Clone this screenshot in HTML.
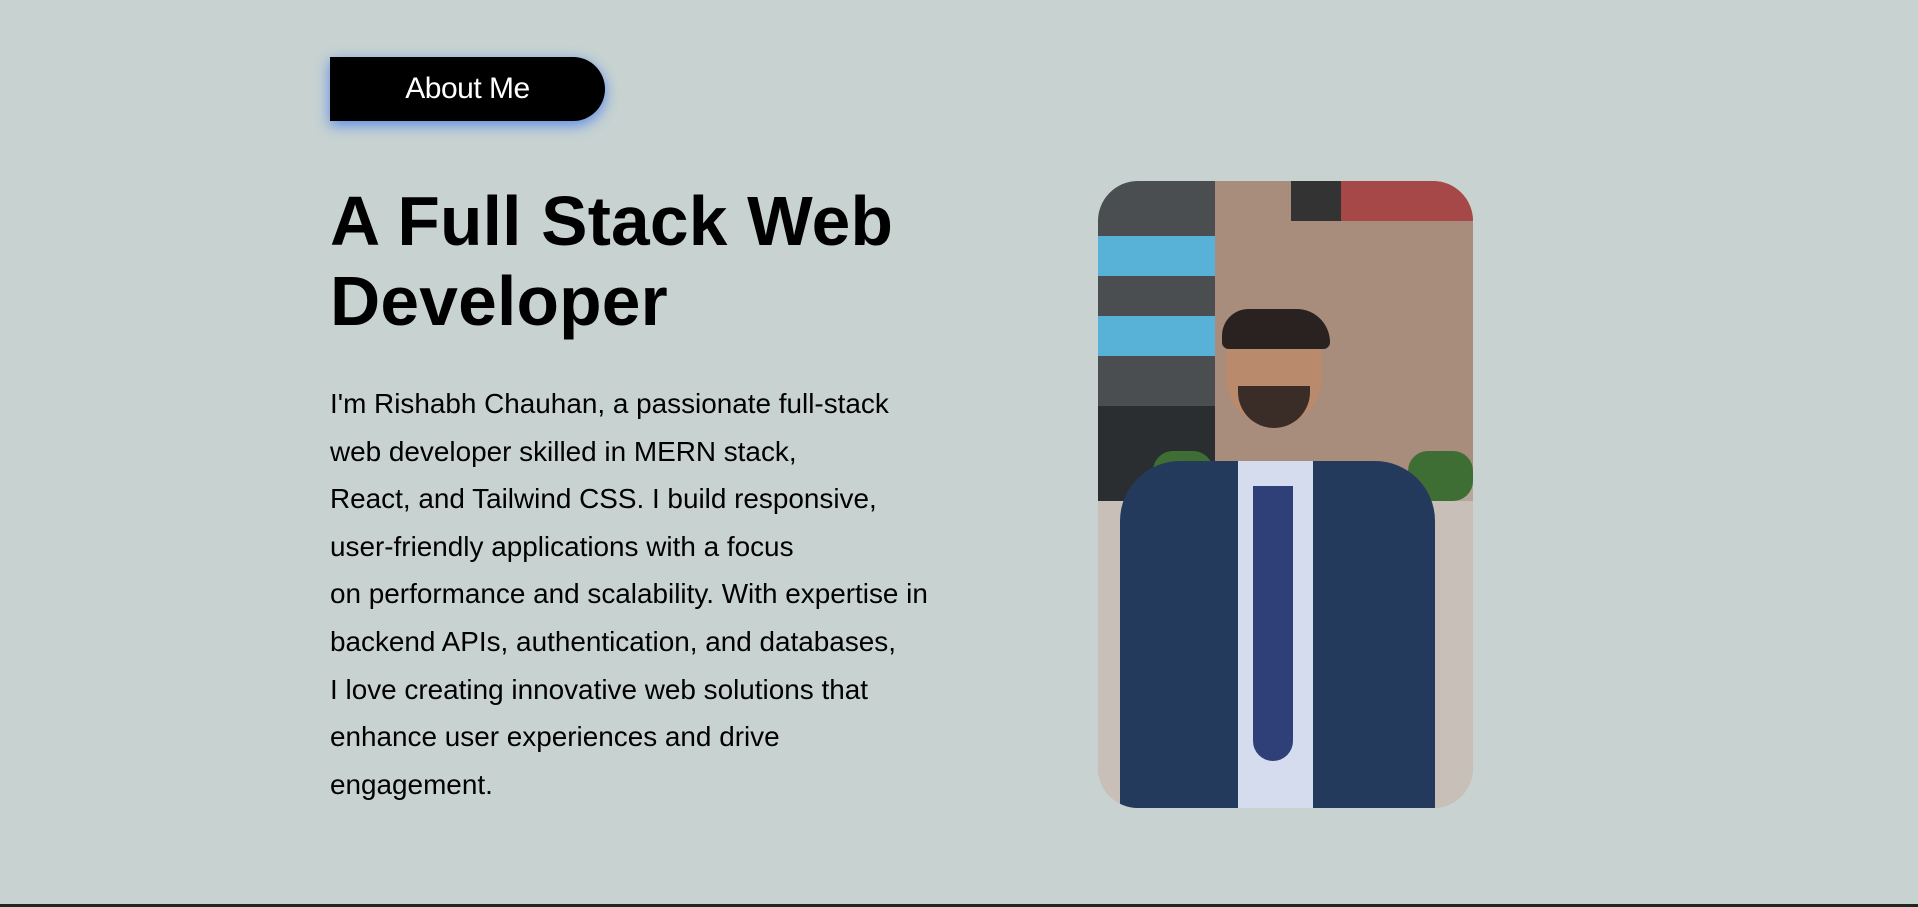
<!DOCTYPE html>
<html><head><meta charset="utf-8"><style>
html,body{margin:0;padding:0}
body{width:1918px;height:907px;background:#c8d3d1;position:relative;overflow:hidden;font-family:"Liberation Sans",Arial,sans-serif;color:#000}
.btn{position:absolute;left:330px;top:57px;width:275px;height:64px;background:#000;color:#fff;border-radius:0 32px 32px 0;box-shadow:0 4px 14px rgba(60,120,240,.8);font-size:30px;line-height:64px;text-align:center;letter-spacing:-0.5px}
h1{position:absolute;left:330px;top:181px;margin:0;font-size:69.5px;line-height:80px;font-weight:bold;letter-spacing:0.2px}
p{position:absolute;left:330px;top:380px;margin:0;font-size:27.9px;line-height:47.6px}
.photo{position:absolute;left:1098px;top:181px;width:375px;height:627px;border-radius:40px;overflow:hidden;background:#b5a79c}
.photo div{position:absolute}
.line{position:absolute;left:0;top:904px;width:1918px;height:3px;background:#1b2a1e}
</style></head><body>
<div class="btn">About Me</div>
<h1>A Full Stack Web<br>Developer</h1>
<p>I'm Rishabh Chauhan, a passionate full-stack<br>web developer skilled in MERN stack,<br>React, and Tailwind CSS. I build responsive,<br>user-friendly applications with a focus<br>on performance and scalability. With expertise in<br>backend APIs, authentication, and databases,<br>I love creating innovative web solutions that<br>enhance user experiences and drive<br>engagement.</p>
<div class="photo">
 <div style="left:0;top:0;width:117px;height:330px;background:#4a4e50"></div>
 <div style="left:0;top:55px;width:117px;height:40px;background:#58b2d8"></div>
 <div style="left:0;top:135px;width:117px;height:40px;background:#58b2d8"></div>
 <div style="left:0;top:225px;width:117px;height:95px;background:#2b2e30"></div>
 <div style="left:117px;top:0;width:258px;height:300px;background:#a88c7c"></div>
 <div style="left:193px;top:0;width:182px;height:40px;background:#a64848"></div>
 <div style="left:193px;top:0;width:50px;height:40px;background:#333"></div>
 <div style="left:0;top:320px;width:375px;height:307px;background:#c8c0b8"></div>
 <div style="left:310px;top:270px;width:65px;height:50px;background:#3f6e35;border-radius:20px"></div>
 <div style="left:55px;top:270px;width:60px;height:40px;background:#3f6e35;border-radius:20px"></div>
 <div style="left:128px;top:135px;width:96px;height:110px;background:#ba8a6c;border-radius:45px 45px 50px 50px"></div>
 <div style="left:124px;top:128px;width:108px;height:40px;background:#2a2220;border-radius:40px 50px 10px 10px"></div>
 <div style="left:140px;top:205px;width:72px;height:42px;background:#3a2c26;border-radius:0 0 36px 36px"></div>
 <div style="left:22px;top:280px;width:315px;height:347px;background:#243a5c;border-radius:60px 60px 0 0"></div>
 <div style="left:140px;top:280px;width:75px;height:347px;background:#d4dcee"></div>
 <div style="left:155px;top:305px;width:40px;height:275px;background:#2f3f78;border-radius:0 0 20px 20px"></div>
</div>
<div class="line"></div>
</body></html>
